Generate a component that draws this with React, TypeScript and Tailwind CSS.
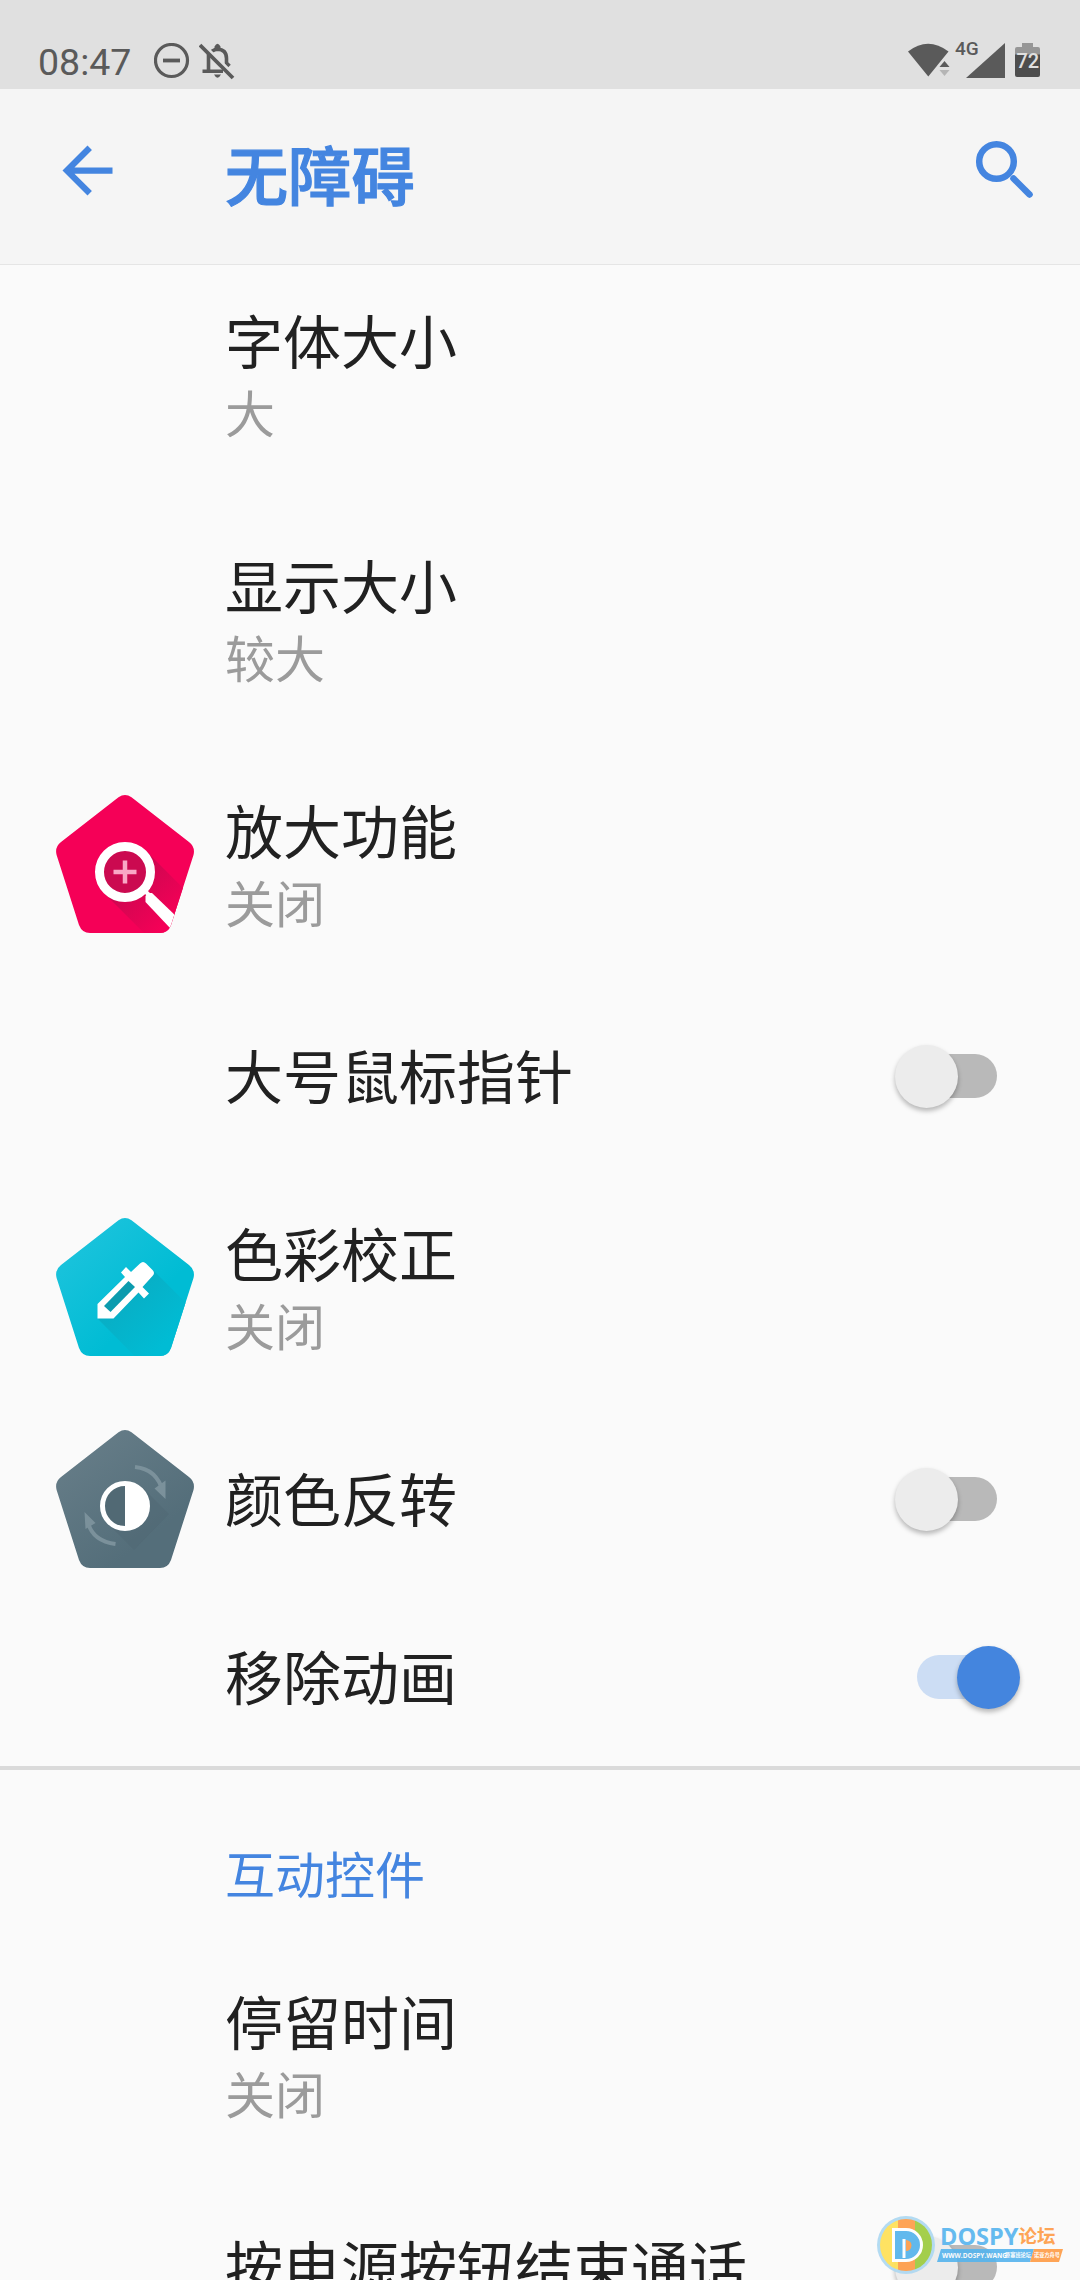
import * as React from 'react';

type IconName = 'magnify' | 'dropper' | 'invert';

interface Setting {
  title: string;
  summary?: string;
  icon?: IconName;
  checked?: boolean;
}

const displaySettings: Setting[] = [
  { title: '字体大小', summary: '大' },
  { title: '显示大小', summary: '较大' },
  { title: '放大功能', summary: '关闭', icon: 'magnify' },
  { title: '大号鼠标指针', checked: false },
  { title: '色彩校正', summary: '关闭', icon: 'dropper' },
  { title: '颜色反转', icon: 'invert', checked: false },
  { title: '移除动画', checked: true },
];

const controlSettings: Setting[] = [
  { title: '停留时间', summary: '关闭' },
  { title: '按电源按钮结束通话', checked: false },
];

const PENTAGON =
  'M62.5 2.2 Q69 -2 75.5 2.2 L133 47 Q139.5 52 137.500 60 L115 130 Q112 138 104 138 H34 Q26 138 23 130 L.6 60 Q-1.500 52 5 47 Z';

function StatusBar() {
  return (
    <div className="flex h-[89px] shrink-0 items-start justify-between bg-[#e0e0e0] pr-10 pl-[38px] text-[#5a5a5a]">
      <div className="flex items-start pt-[43px]">
        <span className="mt-[1px] w-[116px] font-['Roboto'] text-[37.500px] leading-[36px]">08:47</span>
        <svg width="36" height="36" viewBox="0 0 36 36" fill="none" stroke="currentColor">
          <circle cx="17.500" cy="17.500" r="16" strokeWidth="3.200" />
          <path d="M9 17.500h17" strokeWidth="3.800" />
        </svg>
        <svg className="ml-[9px]" width="36" height="38" viewBox="0 0 36 38" fill="none" stroke="currentColor">
          <path d="M9.500 11v17M3.500 28.300H24M12.500 8.500Q16 6.300 18.500 6.300Q27.500 6.500 27.500 15.500V20l3 3" strokeWidth="3.600" />
          <path d="M3 0l33 33" stroke="#e0e0e0" strokeWidth="3" />
          <path d="M1 2l33 33" strokeWidth="3.800" />
          <path d="M15.500 6v-2.500q3-5.500 6 0V6zM15 31.500h7q-3.500 6.500-7 0z" fill="currentColor" stroke="none" />
        </svg>
      </div>
      <div className="flex items-start pt-[42px]">
        <svg width="42" height="36" viewBox="0 0 42 36" fill="currentColor">
          <path d="M0 9.500Q20-6 40.500 9.500L20.300 34.500Z" />
          <path d="M36 17l7 8.500h-14z" fill="#e0e0e0" />
          <path d="M36.500 19l5 6h-10z" />
          <path d="M36.500 34l5-6h-10z" fill="#b5b5b5" />
        </svg>
        <div className="relative ml-[5px] h-9 w-[50px]">
          <span className="absolute top-[-2px] left-0 font-['Roboto'] text-[19px] leading-[18px] font-medium">4G</span>
          <svg className="absolute top-[1px] left-[11px]" width="39" height="35" viewBox="0 0 39 35">
            <path d="M0 35L39 0v35z" fill="currentColor" />
          </svg>
        </div>
        <div className="relative ml-[10px] h-9 w-[25px]">
          <svg className="absolute top-0 left-0" width="25" height="36" viewBox="0 0 25 36">
            <path d="M7 1h11v4h5q2 0 2 2v6H0V7q0-2 2-2h5z" fill="#969696" />
            <path d="M0 12.500h25V33q0 2-2 2H2q-2 0-2-2z" fill="#4d4d4d" />
          </svg>
          <span className="absolute top-[9px] left-[1.500px] font-['Roboto'] text-[20px] leading-5 font-medium text-[#e0e0e0]">
            72
          </span>
        </div>
      </div>
    </div>
  );
}

function AppBar() {
  return (
    <header className="flex h-[176px] shrink-0 items-start border-b border-[#e5e5e5] bg-[#f5f5f5] pt-[44px] pr-[46px] pl-[50px] text-[#4485e0]">
      <svg width="75" height="75" viewBox="0 0 24 24" fill="currentColor">
        <path d="M20 11H7.830l5.590-5.590L12 4l-8 8 8 8 1.410-1.410L7.830 13H20v-2z" />
      </svg>
      <h1 className="-mt-[2px] ml-[100px] flex-1 text-[63.200px] leading-[84px] font-medium [-webkit-text-stroke:1.200px_#4485e0]">
        无障碍
      </h1>
      <svg className="mt-[7px]" width="60" height="60" viewBox="0 0 60 60" fill="none" stroke="currentColor" strokeWidth="6.500">
        <circle cx="22.500" cy="21.500" r="17.300" />
        <path d="M39.500 38.500L55.500 54.500" strokeLinecap="round" />
      </svg>
    </header>
  );
}

function MagnifyIcon() {
  return (
    <svg width="138" height="138" viewBox="0 0 138 138">
      <defs>
        <clipPath id="mag-clip">
          <path d={PENTAGON} />
        </clipPath>
        <linearGradient id="mag-shade" x1="60" y1="70" x2="115" y2="125" gradientUnits="userSpaceOnUse">
          <stop stopColor="#c0094e" />
          <stop offset="1" stopColor="#f50057" />
        </linearGradient>
      </defs>
      <g clipPath="url(#mag-clip)">
        <path d="M0-5H138V138H0z" fill="#f50057" />
        <path d="M90 56L160 126V180H130L48 98z" fill="url(#mag-shade)" />
        <circle cx="69" cy="77" r="25.500" fill="#cb0a50" stroke="#fff" strokeWidth="9" />
        <path d="M69 65.500v23M57.500 77h23" stroke="#f9a8c5" strokeWidth="4.500" />
        <path d="M92 98h4L122 123 114 133 89.500 107V101z" fill="#fff" />
        <path d="M86 93l7 7" stroke="#fff" strokeWidth="4" />
      </g>
    </svg>
  );
}

function DropperIcon() {
  return (
    <svg width="138" height="138" viewBox="0 0 138 138">
      <defs>
        <clipPath id="drop-clip">
          <path d={PENTAGON} />
        </clipPath>
        <linearGradient id="drop-bg" x1="20" y1="20" x2="90" y2="90" gradientUnits="userSpaceOnUse">
          <stop stopColor="#1bc3dc" />
          <stop offset="1" stopColor="#00bcd4" />
        </linearGradient>
        <linearGradient id="drop-shade" x1="60" y1="65" x2="115" y2="120" gradientUnits="userSpaceOnUse">
          <stop stopColor="#0aabc2" />
          <stop offset="1" stopColor="#00bcd4" />
        </linearGradient>
      </defs>
      <g clipPath="url(#drop-clip)">
        <path d="M0-5H138V138H0z" fill="url(#drop-bg)" />
        <path d="M97 52L160 115V180H120L42 101z" fill="url(#drop-shade)" />
        <path
          d="M84 45.500q3-3 6 0l6.500 6.500q3 3 0 6l-10 11 6.500 6.500-5 5-5.500-6L57.500 100.500H41.500V86L69 59 65 54.500l5-5.500 5 5z"
          fill="#fff"
        />
        <path d="M72.500 63l6.500 6L54.500 94l-6.500-6z" fill="#0b9bae" />
      </g>
    </svg>
  );
}

function InvertIcon() {
  return (
    <svg width="138" height="138" viewBox="0 0 138 138">
      <defs>
        <clipPath id="inv-clip">
          <path d={PENTAGON} />
        </clipPath>
        <linearGradient id="inv-bg" x1="20" y1="20" x2="90" y2="110" gradientUnits="userSpaceOnUse">
          <stop stopColor="#657c87" />
          <stop offset="1" stopColor="#546e7a" />
        </linearGradient>
      </defs>
      <g clipPath="url(#inv-clip)">
        <path d="M0-5H138V138H0z" fill="url(#inv-bg)" />
        <path d="M87 58L113 84 78 120 51 93z" fill="#4f6873" opacity=".5" />
      </g>
      <g stroke="#7b919b" strokeWidth="4" fill="none">
        <path d="M79 37Q101 39 107 62" />
        <path d="M59.500 114Q36 111 31.500 91" />
      </g>
      <path d="M98.500 58.500L109.500 50.500V69zM28.500 82L39.500 93 29.500 99z" fill="#7b919b" />
      <circle cx="69" cy="76" r="22.500" fill="#516974" stroke="#fff" strokeWidth="5" />
      <path d="M69 52.500a23.500 23.500 0 0 1 0 47z" fill="#fff" />
    </svg>
  );
}

const icons: Record<IconName, () => React.ReactElement> = {
  magnify: MagnifyIcon,
  dropper: DropperIcon,
  invert: InvertIcon,
};

function Switch({ checked }: { checked: boolean }) {
  return (
    <div
      role="switch"
      aria-checked={checked}
      className={`flex h-[63px] w-[126px] items-center ${checked ? 'justify-end' : 'justify-start'}`}
    >
      <div className={`h-11 w-20 rounded-full ${checked ? '-mr-10 bg-[#ccddf4]' : 'order-2 -ml-[41px] bg-[#b9b9b9]'}`} />
      <div
        className={`z-10 size-[63px] rounded-full shadow-[0_3px_5px_rgba(0,0,0,0.28)] ${
          checked ? 'bg-[#4485de]' : 'ml-px bg-[#ececec]'
        }`}
      />
    </div>
  );
}

function SettingRow({ title, summary, icon, checked }: Setting) {
  const Icon = icon && icons[icon];
  return (
    <div className={`flex shrink-0 items-center pr-[60px] pl-14 ${summary ? 'h-[245px]' : 'h-[178px]'}`}>
      <div className={`w-[169px] shrink-0 ${summary ? 'pb-px' : ''}`}>{Icon && <Icon />}</div>
      <div className={`flex-1 whitespace-nowrap ${summary ? 'pb-[6px]' : 'pb-1'}`}>
        <div className="text-[58px] leading-[78px] text-[#212121]">{title}</div>
        {summary && <div className="text-[50px] leading-[66px] text-[#9b9b9b]">{summary}</div>}
      </div>
      {checked !== undefined && <Switch checked={checked} />}
    </div>
  );
}

function ForumBadge() {
  return (
    <div className="absolute top-[2215px] left-[877px] z-20 flex opacity-90">
      <svg width="59" height="60" viewBox="0 0 59 60">
        <defs>
          <clipPath id="badge-clip">
            <circle cx="29" cy="30" r="26" />
          </clipPath>
        </defs>
        <circle cx="29" cy="30" r="29" fill="#acd8f2" />
        <g clipPath="url(#badge-clip)">
          <path d="M0 0h21v60H0z" fill="#ffe052" />
          <path d="M21 0h17v60H21z" fill="#ff9b45" />
          <path d="M38 0h21v60H38z" fill="#9ccb3b" />
        </g>
        <path d="M16.500 14.500H29a15.500 15.500 0 0 1 0 31H16.500z" fill="#52b3ec" stroke="#fff" strokeWidth="3" />
        <path d="M27 24v19" stroke="#fff" strokeWidth="3" />
        <path d="M29 25a5.500 5.500 0 0 1 0 11z" fill="#ff9b45" />
      </svg>
      <div className="ml-[4px] pt-[8px] whitespace-nowrap">
        <div className="flex items-center font-['Open_Sans','Noto_Sans_CJK_SC',sans-serif] text-[23.500px] leading-[26px] font-bold text-[#55b4ee]">
          DOSPY<span className="text-[18.500px] text-[#ff9b45]">论坛</span>
        </div>
        <div className="relative -ml-[3px] h-[13px] w-[126px]">
          <svg className="absolute top-0 left-0" width="126" height="13" viewBox="0 0 126 13">
            <path d="M4 0h93l-4 13H0z" fill="#55b4ee" />
            <path d="M97 0h29l-4 13H93z" fill="#ff9b45" />
          </svg>
          <div className="relative flex pl-[5px] font-['Open_Sans','Noto_Sans_CJK_SC',sans-serif] text-[6.500px] leading-[13px] font-bold text-white">
            <span className="w-[63px]">WWW.DOSPY.WANG</span>
            <span className="w-[29px] text-[5.200px]">原塞班论坛</span>
            <span className="text-[5.200px]">诺亚方舟号</span>
          </div>
        </div>
      </div>
    </div>
  );
}

export default function App() {
  return (
    <div className="relative flex h-[2280px] w-[1080px] flex-col overflow-hidden bg-[#fafafa] font-['Noto_Sans_CJK_SC',sans-serif]">
      <StatusBar />
      <AppBar />
      <main className="-mt-[13px] flex flex-col">
        {displaySettings.map((s) => (
          <SettingRow key={s.title} {...s} />
        ))}
        <div className="h-1 shrink-0 bg-[#dadada]" />
        <h2 className="h-[163px] shrink-0 pt-[69px] pl-[225px] text-[50px] leading-[66px] text-[#4485e0]">互动控件</h2>
        {controlSettings.map((s) => (
          <SettingRow key={s.title} {...s} />
        ))}
      </main>
      <ForumBadge />
    </div>
  );
}
